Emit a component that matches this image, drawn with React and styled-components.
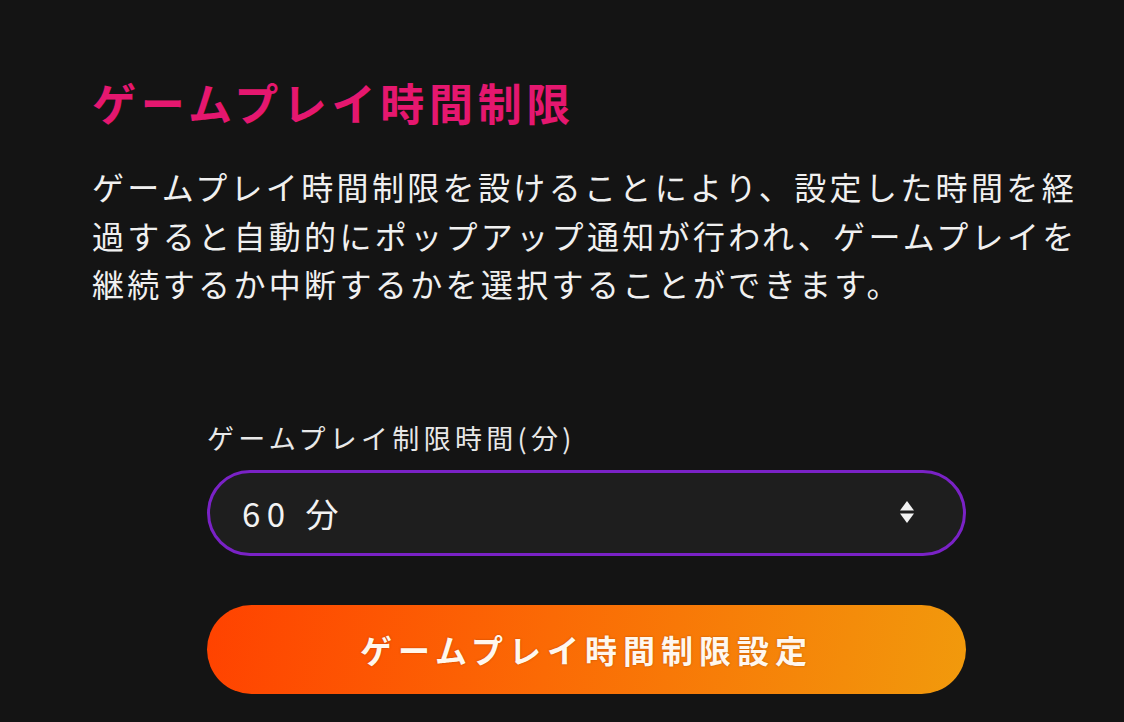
import React, { useState } from "react";
import styled, { createGlobalStyle } from "styled-components";

const Global = createGlobalStyle`
  html, body { margin: 0; padding: 0; background: #141414; }
  body { font-family: "Noto Sans CJK JP", "Noto Sans", sans-serif; color: #f2f2f2; }
`;

const Page = styled.main`
  min-height: 722px;
  background: #141414;
  padding: 70px 40px 0 92px;
  box-sizing: border-box;
`;

const Title = styled.h1`
  margin: 0;
  font-size: 44px;
  font-weight: 700;
  line-height: 64px;
  letter-spacing: 4.7px;
  color: #e5176f;
`;

const Lead = styled.p`
  margin: 28px 0 0;
  font-size: 32px;
  line-height: 48.5px;
  letter-spacing: 3.35px;
  color: #f0f0f0;
  max-width: 995px;
`;

const Form = styled.form`
  width: 759px;
  margin: 112px 0 0 115px;
  display: flex;
  flex-direction: column;
`;

const Label = styled.label`
  font-size: 27px;
  line-height: 36px;
  letter-spacing: 4.3px;
  color: #e8e8e8;
`;

const SelectWrap = styled.div`
  position: relative;
  margin-top: 14px;
`;

const Select = styled.select`
  appearance: none;
  width: 100%;
  height: 86px;
  box-sizing: border-box;
  border: 3px solid #7a22c6;
  border-radius: 43px;
  background: #1e1e1e;
  color: #f2f2f2;
  font-family: "Noto Sans CJK JP", sans-serif;
  font-size: 33px;
  letter-spacing: 6.5px;
  padding: 0 32px;
  outline: none;
`;

const Arrows = styled.svg`
  position: absolute;
  right: 51px;
  top: 29px;
  pointer-events: none;
`;

const Submit = styled.button`
  margin-top: 49px;
  height: 89px;
  border: none;
  border-radius: 45px;
  background: linear-gradient(100deg, #ff4200 0%, #fb6a05 45%, #f19a0c 100%);
  color: #fff7ee;
  font-family: "Noto Sans CJK JP", sans-serif;
  font-size: 32px;
  font-weight: 700;
  letter-spacing: 6px;
  text-shadow: 0 0 2px rgba(120, 40, 0, 0.5);
  cursor: pointer;
`;

export default function App() {
  const [v, setV] = useState("60");
  return (
    <>
      <Global />
      <Page>
        <Title>ゲームプレイ時間制限</Title>
        <Lead>
          ゲームプレイ時間制限を設けることにより、設定した時間を経過すると自動的にポップアップ通知が行われ、ゲームプレイを継続するか中断するかを選択することができます。
        </Lead>
        <Form onSubmit={(e) => e.preventDefault()}>
          <Label htmlFor="limit">ゲームプレイ制限時間(分)</Label>
          <SelectWrap>
            <Select id="limit" value={v} onChange={(e) => setV(e.target.value)}>
              <option value="30">30 分</option>
              <option value="60">60 分</option>
              <option value="90">90 分</option>
              <option value="120">120 分</option>
            </Select>
            <Arrows width="16" height="26" viewBox="0 0 16 26">
              <path d="M8 2 L15 11.5 L1 11.5 Z" fill="#f2f2f2" />
              <path d="M1 14.5 L15 14.5 L8 24 Z" fill="#f2f2f2" />
            </Arrows>
          </SelectWrap>
          <Submit type="submit">ゲームプレイ時間制限設定</Submit>
        </Form>
      </Page>
    </>
  );
}
